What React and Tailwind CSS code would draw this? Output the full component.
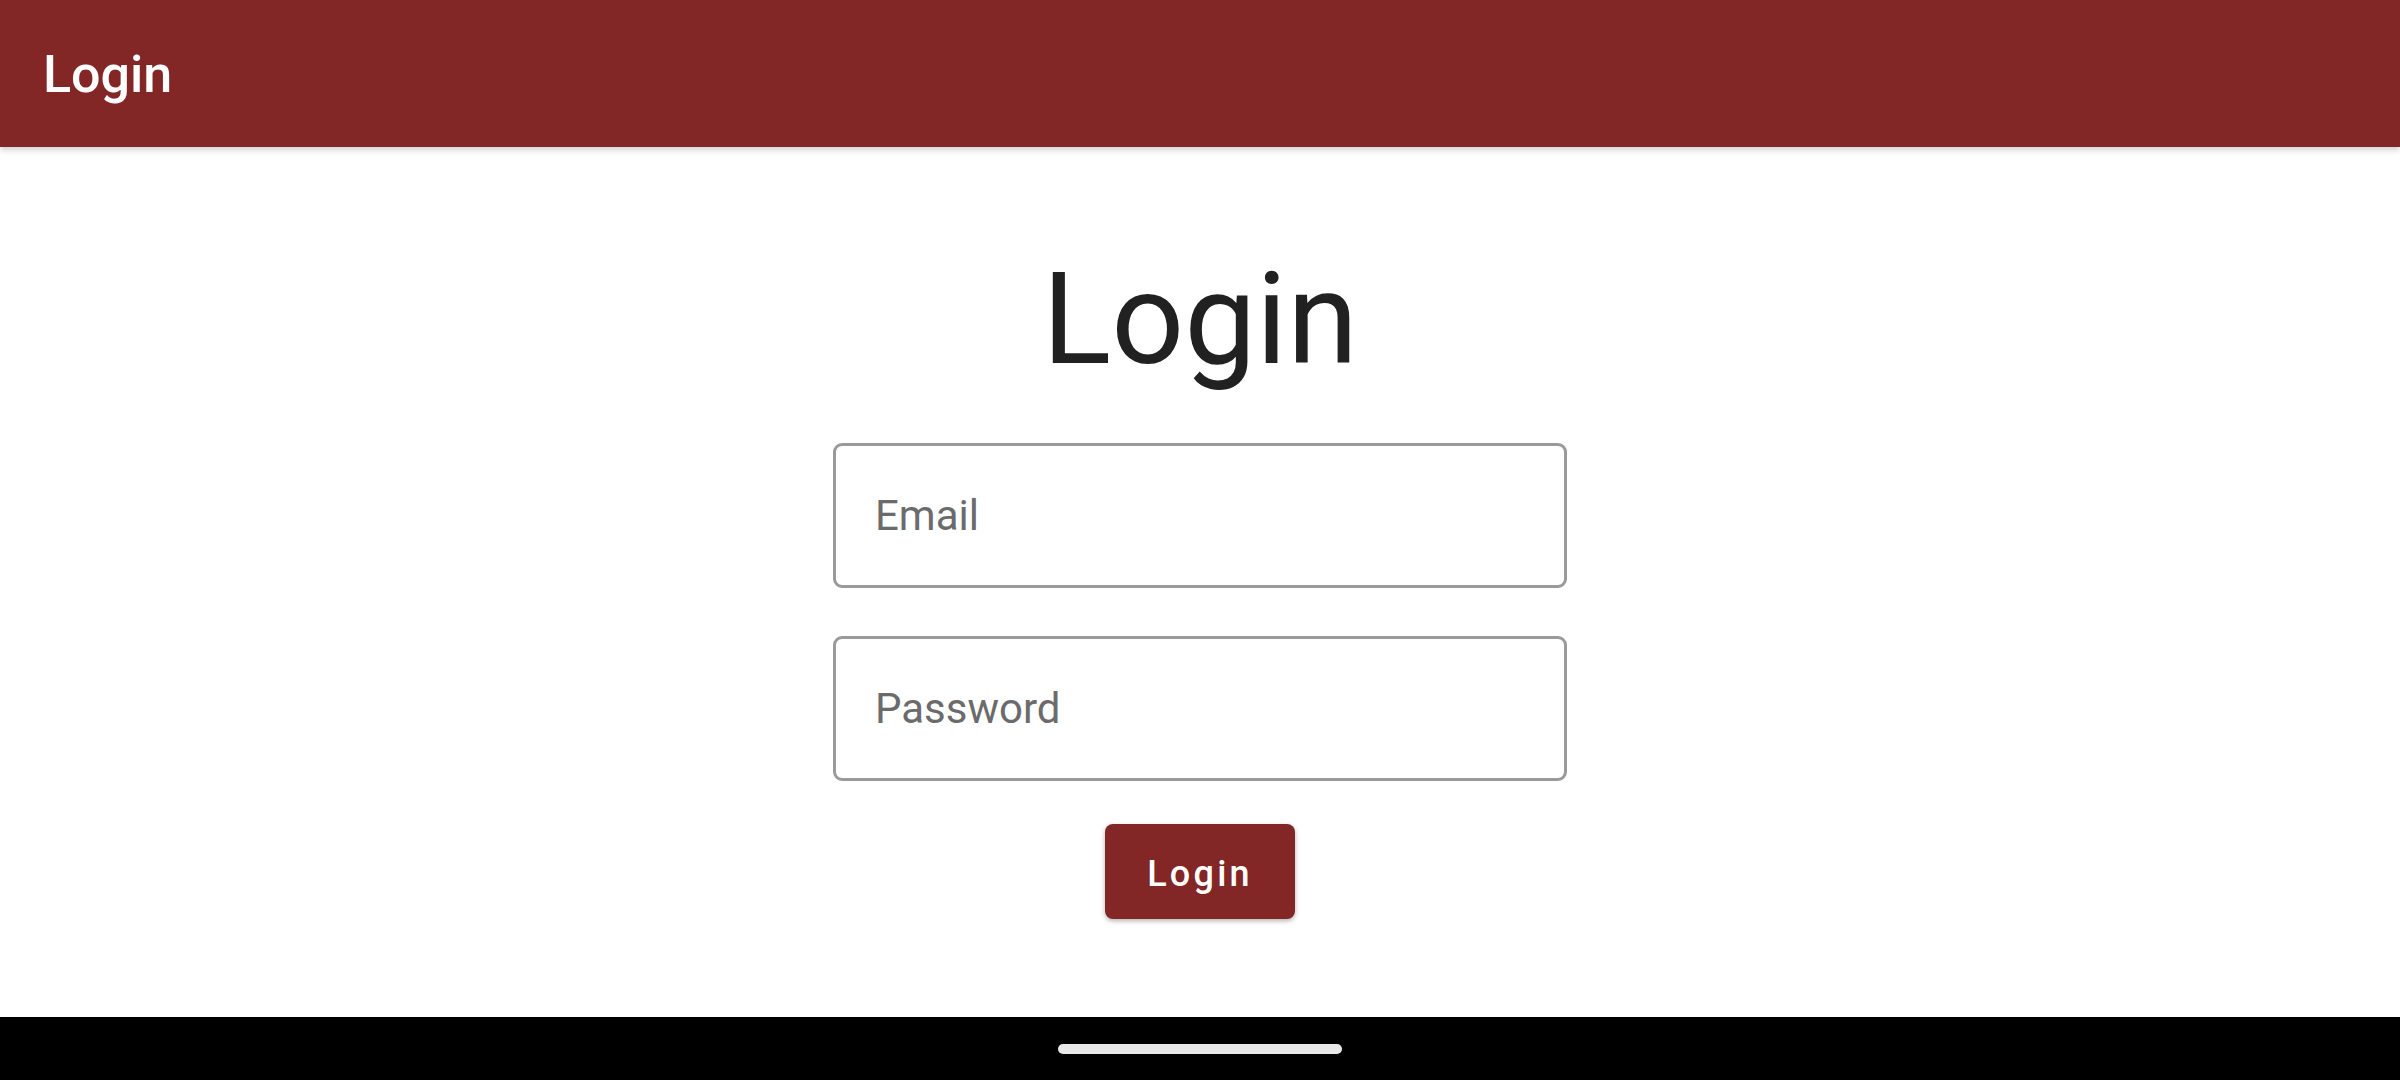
export default function App() {
  return (
    <div className="font-[Roboto,sans-serif] w-[2400px] h-[1080px] flex flex-col bg-white overflow-hidden">
      <header className="h-[147px] shrink-0 bg-[#832626] flex items-center px-[43px] shadow-[0_3px_6px_rgba(0,0,0,0.18)] relative z-10">
        <h1 className="text-white text-[52px] font-medium leading-none pt-[2px]">Login</h1>
      </header>
      <main className="flex-1 flex flex-col items-center">
        <h2 className="mt-[108px] text-[128px] leading-none text-[#212121] font-normal">Login</h2>
        <input
          type="email"
          placeholder="Email"
          className="mt-[60px] w-[734px] h-[145px] border-[3px] border-[#9a9a9a] rounded-[9px] px-[39px] text-[42px] text-[#212121] placeholder:text-[#6b6b6b] outline-none"
        />
        <input
          type="password"
          placeholder="Password"
          className="mt-[48px] w-[734px] h-[145px] border-[3px] border-[#9a9a9a] rounded-[9px] px-[39px] text-[42px] text-[#212121] placeholder:text-[#6b6b6b] outline-none"
        />
        <button className="mt-[43px] w-[190px] h-[95px] pt-[4px] bg-[#832626] rounded-[8px] text-white text-[36px] font-medium tracking-[0.09em] shadow-[0_2px_5px_rgba(0,0,0,0.3)]">
          Login
        </button>
      </main>
      <footer className="h-[63px] shrink-0 bg-black flex items-start justify-center">
        <div className="mt-[27px] w-[284px] h-[10px] rounded-full bg-[#e8e8e8]" />
      </footer>
    </div>
  );
}
